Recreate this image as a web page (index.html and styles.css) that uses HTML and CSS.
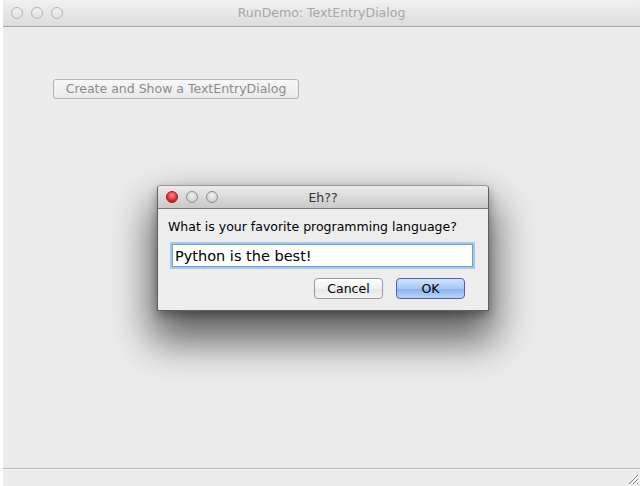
FILE: index.html
```html
<!DOCTYPE html>
<html>
<head>
<meta charset="utf-8">
<link rel="stylesheet" href="styles.css">
</head>
<body>
<div class="window">
  <div class="titlebar">
    <div class="lights">
      <span class="light"></span><span class="light"></span><span class="light"></span>
    </div>
    <div class="title">RunDemo: TextEntryDialog</div>
  </div>
  <div class="content">
    <button class="mainbtn" disabled>Create and Show a TextEntryDialog</button>
  </div>
  <div class="statusbar">
    <svg class="grip" width="12" height="12" viewBox="0 0 12 12">
      <path d="M11 2 L2 11 M11 6 L6 11 M11 10 L10 11" stroke="#8a8a8a" stroke-width="1"/>
      <path d="M12 3 L3 12 M12 7 L7 12" stroke="#fff" stroke-width="1"/>
    </svg>
  </div>

  <div class="dialog">
    <div class="dtitlebar">
      <div class="dlights">
        <span class="dlight red"></span><span class="dlight"></span><span class="dlight"></span>
      </div>
      <div class="dtitle">Eh??</div>
    </div>
    <div class="dbody">
      <div class="prompt">What is your favorite programming language?</div>
      <input class="field" type="text" value="Python is the best!">
      <div class="buttons">
        <button class="btn">Cancel</button>
        <button class="btn ok">OK</button>
      </div>
    </div>
  </div>
</div>
</body>
</html>
```

FILE: styles.css
```css
html, body {
  margin: 0;
  padding: 0;
  background: #ffffff;
}
body {
  width: 643px;
  height: 486px;
  overflow: hidden;
  font-family: "DejaVu Sans", "Liberation Sans", sans-serif;
}
.window {
  position: relative;
  margin-left: 3px;
  width: 637px;
  height: 486px;
  display: flex;
  flex-direction: column;
  background: #ececec;
}
.titlebar {
  height: 27px;
  box-sizing: border-box;
  border-bottom: 1px solid #a5a5a5;
  background: linear-gradient(#f1f1f1, #dcdcdc);
  display: flex;
  align-items: center;
  position: relative;
  border-radius: 4px 4px 0 0;
}
.lights {
  display: flex;
  gap: 8px;
  margin-left: 8px;
  margin-top: -1px;
}
.light {
  width: 10px;
  height: 10px;
  border-radius: 50%;
  border: 1px solid #b3b3b3;
  background: linear-gradient(#f2f2f2, #e0e0e0);
}
.title {
  position: absolute;
  left: 0;
  right: 0;
  text-align: center;
  font-size: 12.5px;
  color: #a8a8a8;
  top: 5px;
}
.content {
  flex: 1;
  padding: 51px 0 0 50px;
}
.mainbtn {
  height: 20px;
  width: 246px;
  padding: 0;
  font-family: inherit;
  font-size: 12.5px;
  color: #8c8c8c;
  background: linear-gradient(#f7f7f7, #eaeaea);
  border: 1px solid #b6b6b6;
  border-radius: 3px;
}
.statusbar {
  height: 18px;
  border-top: 1px solid #b8b8b8;
  box-sizing: border-box;
  box-shadow: inset 0 1px 0 #f6f6f6;
  display: flex;
  justify-content: flex-end;
  align-items: flex-end;
}
.grip {
  margin: 0 1px 1px 0;
}
.dialog {
  position: absolute;
  left: 154px;
  top: 185px;
  width: 332px;
  height: 126px;
  box-sizing: border-box;
  background: #ededed;
  border: 1px solid #5f5f5f;
  border-top-color: #9a9a9a;
  border-radius: 4px 4px 0 0;
  box-shadow: 0 24px 40px 6px rgba(0, 0, 0, 0.6), 0 4px 10px rgba(0, 0, 0, 0.3);
  display: flex;
  flex-direction: column;
}
.dtitlebar {
  height: 23px;
  box-sizing: border-box;
  border-bottom: 1px solid #7a7a7a;
  background: linear-gradient(#ececec, #c9c9c9);
  border-radius: 3px 3px 0 0;
  position: relative;
  display: flex;
  align-items: center;
}
.dlights {
  display: flex;
  gap: 8px;
  margin-left: 8px;
}
.dlight {
  width: 10px;
  height: 10px;
  border-radius: 50%;
  border: 1px solid #8e8e8e;
  background: radial-gradient(circle at 50% 35%, #f4f4f4, #c0c0c0);
}
.dlight.red {
  border-color: #a3141b;
  background: radial-gradient(circle at 50% 35%, #ff9a9a, #e9202a 60%, #b8121a);
}
.dtitle {
  position: absolute;
  left: 0;
  right: 0;
  text-align: center;
  font-size: 12.5px;
  color: #333;
  top: 4px;
}
.dbody {
  padding: 10px 0 0 10px;
  display: flex;
  flex-direction: column;
}
.prompt {
  font-size: 12.5px;
  color: #000;
  line-height: 15px;
}
.field {
  margin: 10px 0 0 4px;
  width: 301px;
  height: 23px;
  box-sizing: border-box;
  border: 1px solid #6f9fd6;
  box-shadow: 0 0 0 2px #a5c8ee;
  padding: 0 2px;
  font-family: inherit;
  font-size: 14.5px;
  color: #000;
  outline: none;
  background: #fff;
}
.buttons {
  display: flex;
  gap: 13px;
  margin: 11px 0 0 146px;
}
.btn {
  width: 69px;
  height: 21px;
  padding: 0;
  font-family: inherit;
  font-size: 12.5px;
  color: #000;
  border: 1px solid #9a9a9a;
  border-radius: 4px;
  background: linear-gradient(#ffffff, #f1f1f1 50%, #e6e6e6 51%, #f3f3f3);
}
.btn.ok {
  border-color: #4f61a6;
  background: linear-gradient(#d3e4fa, #a8c8f3 50%, #86b2ee 51%, #b8d5f8);
}
```
